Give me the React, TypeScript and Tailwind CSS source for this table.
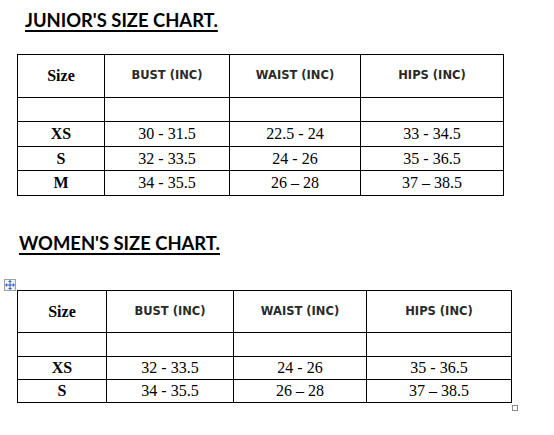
import React from "react";

type Row = [string, string, string, string];

const serif = "font-['Liberation_Serif','Times_New_Roman',serif]";
const headSans = "font-['DejaVu_Sans',Verdana,sans-serif]";

function Cell({ children, kind }: { children?: React.ReactNode; kind: "size" | "head" | "data" | "sizeData" }) {
  const cls =
    kind === "head"
      ? `${headSans} text-[11.5px] font-bold text-[#2a2a2a]`
      : kind === "size" || kind === "sizeData"
      ? `${serif} text-[16px] font-bold text-black`
      : `${serif} text-[16px] text-black`;
  return <div className={`bg-white flex items-center justify-center leading-none ${cls}`}>{children}</div>;
}

function SizeTable({ cols, rows, data }: { cols: string; rows: string; data: Row[] }) {
  return (
    <div className={`grid ${cols} ${rows} gap-px p-px bg-black w-fit`}>
      <Cell kind="size">Size</Cell>
      <Cell kind="head">BUST (INC)</Cell>
      <Cell kind="head">WAIST (INC)</Cell>
      <Cell kind="head">HIPS (INC)</Cell>
      <Cell kind="data" />
      <Cell kind="data" />
      <Cell kind="data" />
      <Cell kind="data" />
      {data.map((r) => (
        <React.Fragment key={r[0]}>
          <Cell kind="sizeData">{r[0]}</Cell>
          <Cell kind="data">{r[1]}</Cell>
          <Cell kind="data">{r[2]}</Cell>
          <Cell kind="data">{r[3]}</Cell>
        </React.Fragment>
      ))}
    </div>
  );
}

function MoveIcon() {
  return (
    <div className="absolute left-[-13px] top-[-11px] w-[12px] h-[12px] border border-[#a0a0a0] bg-[#f4f4f4]">
      <svg width="10" height="10" viewBox="0 0 10 10" className="block">
        <g stroke="#2b63c6" strokeWidth="1" fill="none">
          <line x1="5" y1="1" x2="5" y2="9" />
          <line x1="1" y1="5" x2="9" y2="5" />
        </g>
        <g fill="#2b63c6">
          <polygon points="5,0 3,2 7,2" />
          <polygon points="5,10 3,8 7,8" />
          <polygon points="0,5 2,3 2,7" />
          <polygon points="10,5 8,3 8,7" />
        </g>
      </svg>
    </div>
  );
}

export default function App() {
  const junior: Row[] = [
    ["XS", "30 - 31.5", "22.5 - 24", "33 - 34.5"],
    ["S", "32 - 33.5", "24 - 26", "35 - 36.5"],
    ["M", "34 - 35.5", "26 \u2013 28", "37 \u2013 38.5"],
  ];
  const women: Row[] = [
    ["XS", "32 - 33.5", "24 - 26", "35 - 36.5"],
    ["S", "34 - 35.5", "26 \u2013 28", "37 \u2013 38.5"],
  ];
  const title =
    "font-['Lato','Liberation_Sans',sans-serif] font-bold text-[18.4px] leading-[22px] text-black underline decoration-2 underline-offset-[3px]";
  return (
    <div className="w-[554px] h-[435px] bg-white relative overflow-hidden">
      <div className="h-[54px] pl-[25px] pt-[9px]">
        <span className={title}>JUNIOR'S SIZE CHART.</span>
      </div>
      <div className="pl-[17px]">
        <SizeTable
          cols="grid-cols-[86px_124px_130px_142px]"
          rows="grid-rows-[42px_23px_24px_23px_24px]"
          data={junior}
        />
      </div>
      <div className="h-[94px] pl-[19px] pt-[36px]">
        <span className={title}>WOMEN'S SIZE CHART.</span>
      </div>
      <div className="pl-[17px]">
        <div className="relative w-fit">
          <MoveIcon />
          <SizeTable
            cols="grid-cols-[88px_126px_132px_144px]"
            rows="grid-rows-[41px_23px_22px_22px]"
            data={women}
          />
          <div className="absolute right-[-6px] bottom-[-8px] w-[6px] h-[6px] border border-[#8a8a8a] bg-white" />
        </div>
      </div>
    </div>
  );
}
